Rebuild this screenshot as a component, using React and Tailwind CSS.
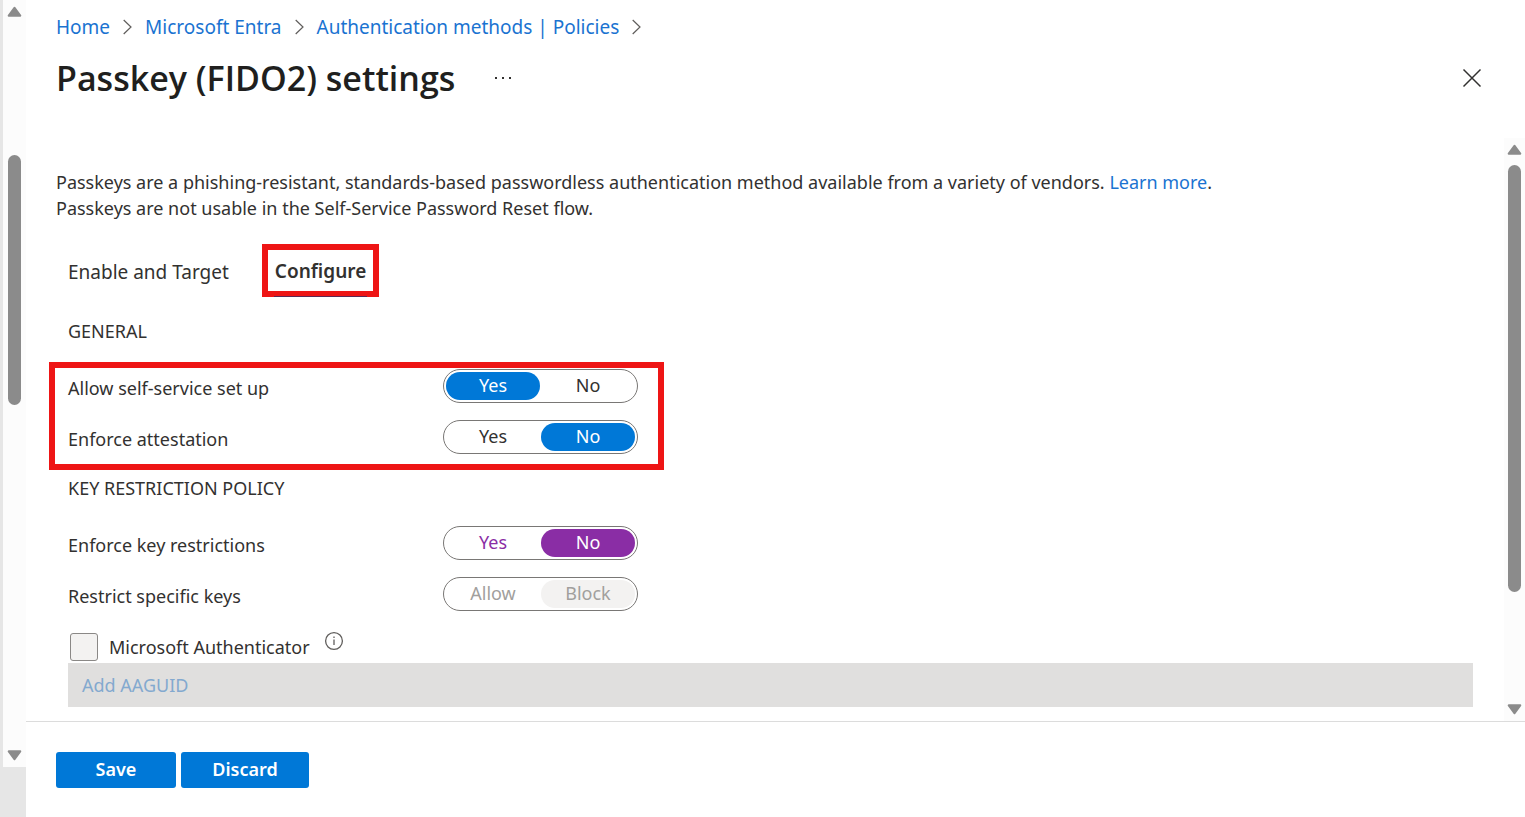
import { useState } from 'react';

const Arrow = ({ down }) => (
    <svg className={down ? 'rotate-180' : ''} width="15" height="11" viewBox="0 0 15 11" aria-hidden="true">
        <path d="M7.5 1.9 L13.2 9.7 H1.8 Z" fill="#8b8b8b" stroke="#8b8b8b" strokeWidth="2.2" strokeLinejoin="round" />
    </svg>
);

const Chevron = () => (
    <svg className="mx-[13px]" width="9" height="16" viewBox="0 0 9 16" fill="none" stroke="#605e5c" strokeWidth="1.2" aria-hidden="true">
        <path d="M0.7 1 L8 8 L0.7 15" />
    </svg>
);

const Toggle = ({ label, name, options, value, onChange, tone, disabled }) => {
    const optionClass = (selected) => {
        if (tone === 'purple') return selected ? 'bg-[#8a2da5] text-white' : 'text-[#8a2da5]';
        if (disabled) return selected ? 'bg-[#f3f2f1] text-[#a19f9d]' : 'text-[#a19f9d]';
        return selected ? 'bg-[#0078d7] text-white' : 'text-[#323130]';
    };

    return (
        <div className="flex items-center" role="radiogroup" aria-label={label}>
            <span className="w-[375px] pt-[3px]">{label}</span>
            <div className="flex w-[195px] justify-between rounded-full border border-[#797775] p-[2px]">
                {options.map((option) => (
                    <label
                        key={option}
                        className={`flex h-7 w-[94px] items-center justify-center rounded-full pb-[2px] ${optionClass(option === value)}`}
                    >
                        <input
                            className="sr-only"
                            type="radio"
                            name={name}
                            checked={option === value}
                            disabled={disabled}
                            onChange={() => onChange(option)}
                        />
                        {option}
                    </label>
                ))}
            </div>
        </div>
    );
};

const App = () => {
    const [settings, setSettings] = useState({
        selfService: 'Yes',
        attestation: 'No',
        restrictions: 'No',
        specificKeys: 'Block'
    });

    const handleChange = (name) => (value) => {
        setSettings((prevValue) => ({
            ...prevValue,
            [name]: value
        }));
    };

    return (
        <div className="flex min-h-screen bg-white font-['Segoe_UI','Noto_Sans',sans-serif] text-lg leading-[26px] text-[#323130]">
            <div className="flex w-[26px] shrink-0 flex-col bg-[#e6e6e6] pb-[50px]">
                <div className="ml-[3px] flex flex-1 flex-col items-center bg-[#fcfcfc] py-[6px]">
                    <Arrow />
                    <div className="flex w-[13px] flex-1 flex-col pt-[138px]">
                        <div className="h-[250px] rounded-full bg-[#8b8b8b]" />
                    </div>
                    <Arrow down />
                </div>
            </div>

            <div className="flex min-w-0 flex-1 flex-col">
                <header className="pt-[14px] pr-[41px] pb-[38px] pl-[30px]">
                    <nav className="flex items-center text-[19px] text-[#1a73d1]" aria-label="Breadcrumb">
                        <a href="#home">Home</a>
                        <Chevron />
                        <a href="#entra">Microsoft Entra</a>
                        <Chevron />
                        <a href="#policies">Authentication methods | Policies</a>
                        <Chevron />
                    </nav>
                    <div className="mt-4 flex items-center">
                        <h1 className="font-['Segoe_UI','Open_Sans',sans-serif] text-[34px] leading-[44px] font-semibold text-[#201f1e]">Passkey (FIDO2) settings</h1>
                        <button className="ml-[39px]" type="button" aria-label="More">
                            <svg width="18" height="4" viewBox="0 0 18 4" fill="#323130">
                                <path d="M1 1h2v2H1zM8 1h2v2H8zM15 1h2v2h-2z" />
                            </svg>
                        </button>
                        <button className="ml-auto" type="button" aria-label="Close">
                            <svg width="24" height="24" viewBox="0 0 24 24" fill="none" stroke="#323130" strokeWidth="1.5">
                                <path d="M3.5 3.5 L20.5 20.5 M20.5 3.5 L3.5 20.5" />
                            </svg>
                        </button>
                    </div>
                </header>

                <div className="flex flex-1">
                    <main className="flex-1 pt-[31px] pr-[31px] pb-[14px] pl-[23px]">
                        <p className="pl-[7px]">
                            Passkeys are a phishing-resistant, standards-based passwordless authentication method available from a variety of vendors.{' '}
                            <a className="text-[#1a73d1]" href="#learn-more">Learn more</a>.
                            <br />
                            Passkeys are not usable in the Self-Service Password Reset flow.
                        </p>

                        <div className="mt-[23px] flex items-center gap-[33px] pl-[19px] text-[19px]" role="tablist">
                            <button className="pt-[2px]" type="button" role="tab" aria-selected="false">Enable and Target</button>
                            <div className="relative border-[6px] border-[#ee1515] px-[7px] pt-2 pb-[7px]">
                                <button className="font-semibold" type="button" role="tab" aria-selected="true">Configure</button>
                                <span className="absolute inset-x-[6px] -bottom-[6px] h-px bg-[#5b2a55]" />
                            </div>
                        </div>

                        <h2 className="mt-[21px] pl-[19px]">GENERAL</h2>
                        <div className="mt-[18px] flex w-[615px] flex-col gap-[17px] border-[6px] border-[#ee1515] py-[1px] pb-[10px] pl-[13px]">
                            <Toggle label="Allow self-service set up" name="selfService" options={['Yes', 'No']} value={settings.selfService} onChange={handleChange('selfService')} />
                            <Toggle label="Enforce attestation" name="attestation" options={['Yes', 'No']} value={settings.attestation} onChange={handleChange('attestation')} />
                        </div>

                        <h2 className="mt-[5px] pl-[19px]">KEY RESTRICTION POLICY</h2>
                        <div className="mt-[25px] flex flex-col gap-[17px] pl-[19px]">
                            <Toggle label="Enforce key restrictions" name="restrictions" options={['Yes', 'No']} value={settings.restrictions} onChange={handleChange('restrictions')} tone="purple" />
                            <Toggle label="Restrict specific keys" name="specificKeys" options={['Allow', 'Block']} value={settings.specificKeys} onChange={handleChange('specificKeys')} disabled />
                        </div>

                        <div className="mt-5 flex items-center pl-[21px]">
                            <input className="h-7 w-7 appearance-none rounded-[3px] border border-[#8a8886] bg-[#f3f2f1]" id="authenticator" type="checkbox" disabled />
                            <label className="ml-[11px]" htmlFor="authenticator">Microsoft Authenticator</label>
                            <svg className="mb-3 ml-[14px]" width="20" height="20" viewBox="0 0 20 20" fill="none" stroke="#605e5c" strokeWidth="1.3" aria-hidden="true">
                                <circle cx="10" cy="10" r="8.4" />
                                <path d="M10 8.5 V14 M10 5.5 V7" />
                            </svg>
                        </div>
                        <div className="pl-[19px]">
                            <button className="h-11 w-full bg-[#e0dfde] px-[14px] text-left text-[#83a9cf]" type="button" disabled>Add AAGUID</button>
                        </div>
                    </main>

                    <div className="flex w-[21px] shrink-0 flex-col items-center bg-[#fcfcfc] py-[6px]">
                        <Arrow />
                        <div className="flex w-[13px] flex-1 flex-col pt-[10px]">
                            <div className="h-[427px] rounded-full bg-[#8b8b8b]" />
                        </div>
                        <Arrow down />
                    </div>
                </div>

                <footer className="flex gap-[5px] border-t border-[#dcdcdc] pt-[30px] pb-[29px] pl-[30px] font-semibold text-white">
                    <button className="h-9 w-[120px] rounded-[3px] bg-[#0078d7] pb-[2px]" type="button">Save</button>
                    <button className="h-9 w-32 rounded-[3px] bg-[#0078d7] pb-[2px]" type="button">Discard</button>
                </footer>
            </div>
        </div>
    );
};

export default App;
